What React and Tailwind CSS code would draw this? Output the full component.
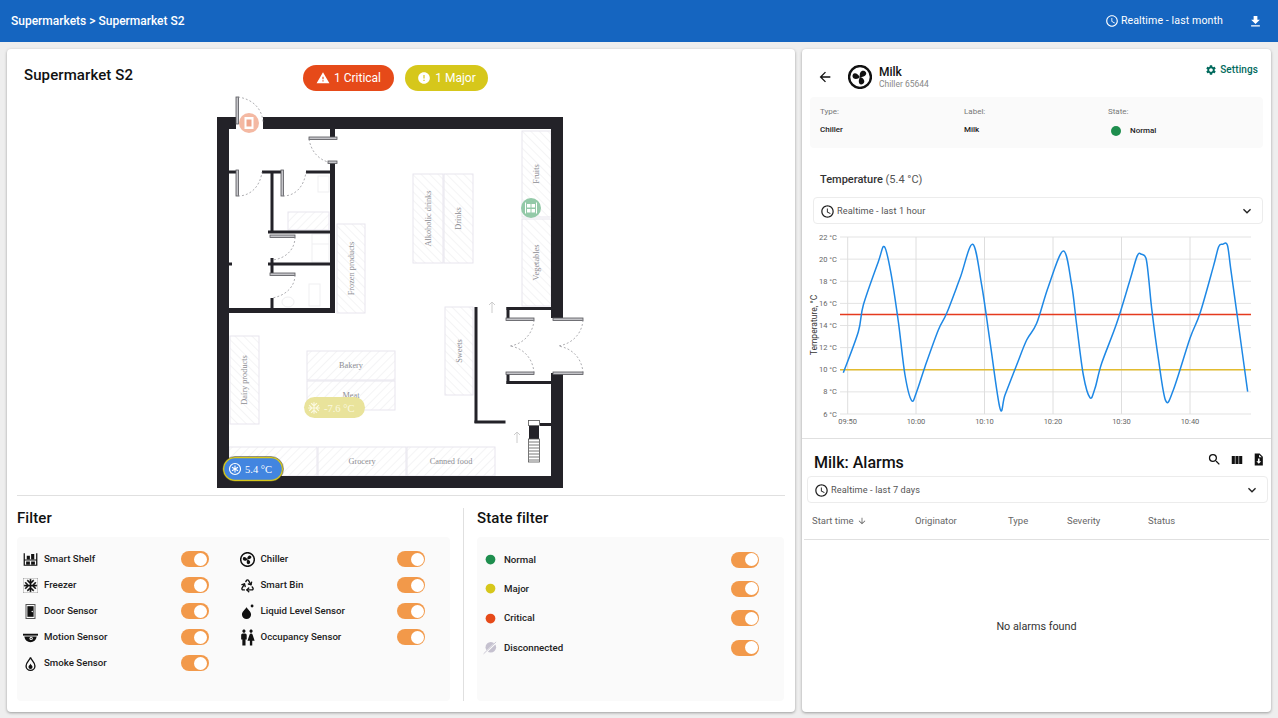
import { Recycle } from "lucide-react";
import {
  MdAccessTime,
  MdAcUnit,
  MdArrowBack,
  MdArrowDownward,
  MdError,
  MdFileDownload,
  MdKeyboardArrowDown,
  MdSearch,
  MdSettings,
  MdViewColumn,
  MdWarning,
  MdWc,
} from "react-icons/md";

/* small hand drawn device icons */
function ChillerIcon({ className }) {
  const blade = "M12 12C10.200 10.800 9.200 8 10.400 6.200c1.500-1.900 4.400-1.300 4.700.7.200 1.900-1.300 3.700-3.100 5.100z";
  return (
    <svg viewBox="1 1 22 22" className={className} fill="currentColor">
      <circle cx="12" cy="12" r="10" fill="none" stroke="currentColor" strokeWidth="2.200" />
      <path d={blade} transform="rotate(35 12 12)" />
      <path d={blade} transform="rotate(155 12 12)" />
      <path d={blade} transform="rotate(275 12 12)" />
    </svg>
  );
}

function FreezerIcon({ className }) {
  return <MdAcUnit className={className} strokeWidth={0.6} />;
}

function BinIcon({ className }) {
  return <Recycle className={className} strokeWidth={2.2} />;
}

function WcIcon() {
  return <MdWc className="-mx-[2px] -my-[2px] h-[19px] w-[19px]" />;
}

function ShelfIcon({ className }) {
  return (
    <svg viewBox="0 0 24 24" className={className} fill="currentColor">
      <path d="M1 2h2v20H1zM21 2h2v20h-2zM1 12h22v1.600H1zM1 20.400h22V22H1z" />
      <path d="M6 6h5v6H6zM13 3h5v9h-5zM5 15h6v5.400H5zM13 15h6v5.400h-6z" />
    </svg>
  );
}

function DoorIcon({ className }) {
  return (
    <svg viewBox="0 0 24 24" className={className} fill="currentColor">
      <path d="M4 0h16v24H4zm1.600 1.600v20.800h12.800V1.600z" fill="#555" />
      <path d="M7 3.500h10v17H7z" />
      <circle cx="14.800" cy="12" r="1.200" fill="#fafafa" />
    </svg>
  );
}

function MotionIcon({ className }) {
  return (
    <svg viewBox="0 0 24 24" className={className} fill="currentColor">
      <path d="M0 6h24v3H0z" />
      <path d="M2 10.500h20C21 16.500 17 19.500 12 19.500S3 16.500 2 10.500z" />
      <circle cx="13" cy="13.500" r="2.600" fill="#fafafa" />
      <circle cx="13" cy="13.500" r="1.200" />
    </svg>
  );
}

function SmokeIcon({ className }) {
  return (
    <svg viewBox="3 1 18 22" className={className} fill="none" stroke="currentColor" strokeWidth="2">
      <path d="M12 3c1 4 6.500 7 6.500 12.500a6.500 6.500 0 0 1-13 0C5.500 10 11 7 12 3z" />
      <path d="M12 12c.5 2 3 3 3 5a3 3 0 0 1-6 0c0-2 2.500-3 3-5z" fill="currentColor" stroke="none" />
    </svg>
  );
}

function LiquidIcon({ className }) {
  return (
    <svg viewBox="2 1 20 23" className={className} fill="currentColor">
      <path d="M10.500 6c2 3.500 7 7 7 11a7 7 0 0 1-14 0c0-4 5-7.500 7-11z" />
      <circle cx="19" cy="4" r="2.200" />
    </svg>
  );
}

function DisconnectedIcon({ className }) {
  return (
    <svg viewBox="0 0 24 24" className={className}>
      <circle cx="12.500" cy="11.500" r="8.500" fill="#c5c1cf" />
      <path d="M2 22 22 3" stroke="#fafafa" strokeWidth="3" />
      <path d="M1 22 21 3" stroke="#c5c1cf" strokeWidth="1.400" />
    </svg>
  );
}

function FileExportIcon({ className }) {
  return (
    <svg viewBox="0 0 24 24" className={className} fill="currentColor">
      <path fillRule="evenodd" d="M5 1h9l6 6v16H5zm8 2v5h5zM11 10v5H8l4.500 5 4.500-5h-3v-5z" />
    </svg>
  );
}

function Toggle() {
  return (
    <div className="flex h-4 w-7 items-center justify-end rounded-full bg-[#f2994a] pr-[1.500px]">
      <div className="h-[13px] w-[13px] rounded-full bg-white" />
    </div>
  );
}

function FilterRow({ icon: Icon, label, h = "h-[26px]" }) {
  return (
    <div className={`flex items-center ${h}`}>
      <div className="flex w-[27px] shrink-0 items-center pl-[6px] text-[#111]">
        <Icon className="h-[15px] w-[15px]" />
      </div>
      <span className="flex-1 pt-[1px] text-[9.700px] font-medium text-[#222]">{label}</span>
      <div className="pr-[25px]">
        <Toggle />
      </div>
    </div>
  );
}

function Dot({ color }) {
  return ({ className }) => (
    <svg viewBox="0 0 24 24" className={className}>
      <circle cx="12" cy="12" r="7.800" fill={color} />
    </svg>
  );
}

const leftFilters = [
  [ShelfIcon, "Smart Shelf"],
  [FreezerIcon, "Freezer"],
  [DoorIcon, "Door Sensor"],
  [MotionIcon, "Motion Sensor"],
  [SmokeIcon, "Smoke Sensor"],
];

const rightFilters = [
  [ChillerIcon, "Chiller"],
  [BinIcon, "Smart Bin"],
  [LiquidIcon, "Liquid Level Sensor"],
  [WcIcon, "Occupancy Sensor"],
];

const stateFilters = [
  [Dot({ color: "#1e8e4e" }), "Normal"],
  [Dot({ color: "#d6c71b" }), "Major"],
  [Dot({ color: "#e64a19" }), "Critical"],
  [DisconnectedIcon, "Disconnected"],
];

/* floor plan, coordinates follow the page so the numbers are easy to check */
const thinWalls = [
  [330, 129, 5, 9],
  [330, 162, 5, 150],
  [229, 170.500, 8, 3],
  [262, 170.500, 20, 3],
  [306, 170.500, 24, 3],
  [270.500, 172, 3, 60],
  [268, 230.500, 62, 3],
  [268, 262.500, 62, 3],
  [270.500, 258, 3, 17],
  [270.500, 298, 3, 10],
  [229, 262.500, 3, 3],
  [229, 308, 106, 5],
  [474.500, 307, 3, 116],
  [474.500, 420.500, 31, 3],
  [506.500, 307, 45, 3],
  [506.500, 307, 3, 12],
  [506.500, 373, 3, 11],
  [506.500, 381, 45, 3],
  [540, 423, 11, 3],
];

const leaves = [
  [236, 97, 2.500, 27],
  [309, 137, 28, 2.500],
  [328, 161, 9, 2.500],
  [236, 170, 2.500, 26],
  [281, 170, 2.500, 26],
  [270, 235, 25, 2.500],
  [270, 273, 25, 2.500],
  [506, 318, 28, 2.500],
  [553, 318, 30, 2.500],
  [506, 372, 28, 2.500],
  [553, 372, 30, 2.500],
];

const arcs = [
  "M238 97C252 99 262 108 263 122",
  "M309 139C311 151 318 159 328 162",
  "M238 196C250 196 260 187 262 172",
  "M283 196C295 196 304 187 306 172",
  "M295 237C295 250 285 259 272 260",
  "M295 275C295 287 285 296 272 298",
  "M534 320C533 334 523 344 510 346",
  "M534 373C533 358 523 348 510 346",
  "M583 320C582 334 572 344 558 346",
  "M583 373C582 358 572 348 558 346",
];

const shelves = [
  { x: 337, y: 224, w: 28, h: 89, label: "Frozen products", v: true, p: "back" },
  { x: 288, y: 212, w: 41, h: 18, p: "fwd" },
  { x: 413, y: 174, w: 30, h: 89, label: "Alkoholic drinks", v: true, p: "back" },
  { x: 444, y: 174, w: 29, h: 89, label: "Drinks", v: true, p: "back" },
  { x: 522, y: 131, w: 29, h: 86, label: "Fruits", v: true, p: "back" },
  { x: 522, y: 219, w: 29, h: 87, label: "Vegetables", v: true, p: "back" },
  { x: 445, y: 307, w: 28, h: 88, label: "Sweets", v: true, p: "back" },
  { x: 230, y: 336, w: 29, h: 88, label: "Dairy products", v: true, p: "back" },
  { x: 307, y: 351, w: 88, h: 29, label: "Bakery", p: "fwd" },
  { x: 307, y: 381, w: 88, h: 29, label: "Meat", p: "fwd" },
  { x: 229, y: 447, w: 88, h: 29, p: "fwd" },
  { x: 318, y: 447, w: 88, h: 29, label: "Grocery", p: "fwd" },
  { x: 407, y: 447, w: 88, h: 29, label: "Canned food", p: "fwd" },
];

function FloorPlan() {
  return (
    <svg viewBox="190 92 410 400" width="410" height="400" className="ml-[183px] block">
      <defs>
        <pattern id="fwd" width="6" height="6" patternUnits="userSpaceOnUse" patternTransform="rotate(45)">
          <line x1="0" y1="0" x2="0" y2="6" stroke="#e9e9ec" strokeWidth="1" />
        </pattern>
        <pattern id="back" width="6" height="6" patternUnits="userSpaceOnUse" patternTransform="rotate(-45)">
          <line x1="0" y1="0" x2="0" y2="6" stroke="#e9e9ec" strokeWidth="1" />
        </pattern>
      </defs>

      {shelves.map((s, i) => (
        <g key={i}>
          <rect x={s.x} y={s.y} width={s.w} height={s.h} fill={`url(#${s.p})`} stroke="#e8e5ee" strokeWidth="1" />
          {s.label && (
            <text
              x={s.x + s.w / 2}
              y={s.y + s.h / 2}
              textAnchor="middle"
              dominantBaseline="central"
              fontFamily="'Liberation Serif', serif"
              fontSize="8.300"
              fill="#8d8d93"
              transform={s.v ? `rotate(-90 ${s.x + s.w / 2} ${s.y + s.h / 2})` : undefined}
            >
              {s.label}
            </text>
          )}
        </g>
      ))}

      {/* faint washroom fittings */}
      <g fill="none" stroke="#efeff1" strokeWidth="1">
        <rect x="318" y="176" width="11" height="16" />
        <rect x="312" y="234" width="17" height="28" />
        <line x1="312" x2="329" y1="244" y2="244" />
        <ellipse cx="288" cy="302" rx="6" ry="5" />
        <rect x="309" y="284" width="11" height="22" />
      </g>

      {/* walls */}
      <rect x="217" y="117" width="12" height="371" fill="#232228" />
      <rect x="217" y="476" width="346" height="12" fill="#232228" />
      <rect x="217" y="117" width="19" height="12" fill="#232228" />
      <rect x="263" y="117" width="300" height="12" fill="#232228" />
      <rect x="551" y="117" width="12" height="201" fill="#232228" />
      <rect x="551" y="373" width="12" height="115" fill="#232228" />
      {thinWalls.map(([x, y, w, h], i) => (
        <rect key={i} x={x} y={y} width={w} height={h} fill="#232228" />
      ))}

      {/* doors */}
      {leaves.map(([x, y, w, h], i) => (
        <rect key={i} x={x} y={y} width={w} height={h} fill="#c4c4c8" stroke="#55555a" strokeWidth="0.800" />
      ))}
      {arcs.map((d) => (
        <path key={d} d={d} fill="none" stroke="#8b8b90" strokeWidth="0.700" strokeDasharray="2 2" />
      ))}

      {/* stairs and arrows */}
      <rect x="528.500" y="420.500" width="11" height="5" fill="#fff" stroke="#555" strokeWidth="0.800" />
      <rect x="529" y="426" width="10" height="13" fill="#232228" />
      <rect x="528.500" y="439" width="11" height="23" fill="#fff" stroke="#555" strokeWidth="0.800" />
      {[442, 445, 448, 451, 454, 457, 460].map((y) => (
        <line key={y} x1="529" x2="539" y1={y} y2={y} stroke="#555" strokeWidth="0.800" />
      ))}
      <path d="M492 313v-11m-3 3 3-3 3 3M517 443v-11m-3 3 3-3 3 3" fill="none" stroke="#ccc" strokeWidth="1" />

      {/* sensors */}
      <circle cx="249" cy="123" r="10" fill="#f4b9a3" />
      <rect x="244.500" y="117" width="9" height="12" fill="#fff" />
      <rect x="246.500" y="119.500" width="5" height="7" fill="#f0a78e" />
      <circle cx="531" cy="208" r="10" fill="#93c9a8" />
      <path d="M525 202.500h1v11h-1zM536 202.500h1v11h-1zM527 204h3.500v3.500H527zM531.500 204h3.500v3.500h-3.500zM527 209h3.500v3.500H527zM531.500 209h3.500v3.500h-3.500z" fill="#fff" />

      <rect x="304" y="397" width="61" height="21" rx="10.500" fill="#e9e39b" />
      <foreignObject x="307" y="401" width="14" height="14">
        <MdAcUnit className="h-[14px] w-[14px] text-[#fbf9e0]" />
      </foreignObject>
      <text x="324" y="411.500" fontFamily="'Liberation Serif', serif" fontSize="10.500" fill="#fbf9e0">-7.6 °C</text>

      <rect x="223.500" y="457.500" width="59" height="23" rx="11.500" fill="#4285e0" stroke="#d6c71b" strokeWidth="1.500" />
      <rect x="222.500" y="456.500" width="61" height="25" rx="12.500" fill="none" stroke="#333" strokeWidth="0.500" />
      <circle cx="235" cy="469" r="5.500" fill="none" stroke="#fff" strokeWidth="1.200" />
      <path d="M235 465.500v7M232 467.200l6 3.600M232 470.800l6-3.600" stroke="#fff" strokeWidth="1.100" />
      <text x="245" y="472.800" fontFamily="'Liberation Serif', serif" fontSize="10.500" fill="#fff">5.4 °C</text>
    </svg>
  );
}

/* chart data read off the curve, in chart pixels */
const curve = [
  [130, 443], [175, 320], [190, 240], [235, 110], [253, 65], [272, 140], [295, 290], [315, 450],
  [335, 527], [350, 500], [375, 425], [415, 315], [440, 265], [480, 160], [518, 58], [545, 180],
  [570, 350], [600, 550], [615, 510], [650, 420], [680, 345], [710, 295], [745, 185], [790, 78],
  [815, 180], [830, 300], [850, 450], [870, 518], [885, 490], [905, 415], [950, 295], [990, 165],
  [1012, 92], [1025, 88], [1038, 100], [1046, 160], [1055, 250], [1075, 400], [1097, 527], [1120, 495], [1170, 340],
  [1200, 265], [1240, 125], [1256, 65], [1268, 58], [1282, 60], [1292, 130], [1310, 260], [1343, 500],
].map(([x, y]) => [800 + x / 3, 225 + y / 3]);

function smoothPath(pts) {
  let d = `M${pts[0][0]} ${pts[0][1]}`;
  for (let i = 0; i < pts.length - 1; i++) {
    const p0 = pts[i - 1] || pts[i];
    const p1 = pts[i];
    const p2 = pts[i + 1];
    const p3 = pts[i + 2] || p2;
    const c1x = p1[0] + (p2[0] - p0[0]) / 6;
    const c1y = p1[1] + (p2[1] - p0[1]) / 6;
    const c2x = p2[0] - (p3[0] - p1[0]) / 6;
    const c2y = p2[1] - (p3[1] - p1[1]) / 6;
    d += `C${c1x} ${c1y} ${c2x} ${c2y} ${p2[0]} ${p2[1]}`;
  }
  return d;
}

const yTicks = [22, 20, 18, 16, 14, 12, 10, 8, 6];
const xTicks = [
  ["09:50", 847.7],
  ["10:00", 916],
  ["10:10", 984.5],
  ["10:20", 1053],
  ["10:30", 1121.5],
  ["10:40", 1190],
];
const yOf = (v) => 237 + ((22 - v) / 16) * 177;

function Chart() {
  return (
    <svg viewBox="802 224 469 214" width="469" height="214" className="block">
      <g fontFamily="Roboto, sans-serif" fontSize="7.500" fill="#666">
        {yTicks.map((v) => (
          <g key={v}>
            <line x1="840" x2="1251" y1={yOf(v)} y2={yOf(v)} stroke="#e3e3e3" strokeWidth="1" />
            <text x="837" y={yOf(v) + 2.500} textAnchor="end">{v} °C</text>
          </g>
        ))}
        {xTicks.map(([t, x]) => (
          <g key={t}>
            <line x1={x} x2={x} y1="237" y2="414" stroke="#dedede" strokeWidth="1" />
            <text x={x} y="424" textAnchor="middle">{t}</text>
          </g>
        ))}
        <text x="0" y="0" fontSize="8.500" fill="#333" textAnchor="middle" transform="translate(817 325) rotate(-90)">
          Temperature, °C
        </text>
      </g>
      <line x1="840" x2="1251" y1="314.500" y2="314.500" stroke="#e53a1e" strokeWidth="1.300" />
      <line x1="840" x2="1251" y1="369.800" y2="369.800" stroke="#e2bb2e" strokeWidth="1.400" />
      <path d={smoothPath(curve)} fill="none" stroke="#1e88e5" strokeWidth="1.500" />
    </svg>
  );
}

function RangeSelect({ label, className }) {
  return (
    <div className={`flex h-[27px] items-center rounded border border-[#ececec] pl-[6px] pr-[7px] pt-[1px] ${className}`}>
      <MdAccessTime className="h-[15px] w-[15px] text-[#222]" />
      <span className="ml-[2px] flex-1 text-[9.200px] tracking-[0.1px] text-[#555]">{label}</span>
      <MdKeyboardArrowDown className="h-[16px] w-[16px] text-[#222]" />
    </div>
  );
}

export default function App() {
  return (
    <div className="flex h-[718px] w-[1278px] flex-col overflow-hidden bg-[#eeeeee] font-['Roboto',sans-serif]">
      {/* Top bar */}
      <header className="flex h-[42px] shrink-0 items-center bg-[#1565c0] pl-[11px] pr-[15px] text-white">
        <span className="flex-1 text-[12px] font-medium">Supermarkets &gt; Supermarket S2</span>
        <MdAccessTime className="h-[14px] w-[14px]" />
        <span className="ml-[2px] text-[10.600px] tracking-[0.1px]">Realtime - last month</span>
        <MdFileDownload className="ml-[25px] h-[15px] w-[15px]" />
      </header>

      <div className="flex flex-1 gap-[7px] px-[7px] pb-[6px] pt-[7px]">
        {/* Floor plan card */}
        <section className="flex w-[788px] flex-col rounded bg-white shadow-[0_1px_3px_rgba(0,0,0,0.35)]">
          <div className="relative flex h-[43px] shrink-0 items-start pl-[17px] pt-[16px]">
            <h1 className="text-[15px] font-medium leading-[20px] tracking-[0.1px] text-[#111]">Supermarket S2</h1>
            <div className="absolute left-[296px] top-[16px] flex gap-[11px]">
              <div className="flex h-[26px] w-[91px] items-center justify-center gap-[4px] rounded-full bg-[#e64a19] text-[12px] text-white">
                <MdWarning className="h-[14px] w-[14px]" />
                1 Critical
              </div>
              <div className="flex h-[26px] w-[83px] items-center justify-center gap-[4px] rounded-full bg-[#d6c71b] text-[12px] text-white">
                <MdError className="h-[14px] w-[14px]" />
                1 Major
              </div>
            </div>
          </div>

          <FloorPlan />

          <div className="mx-[10px] mt-[3px] flex h-[206px] border-t border-[#e0e0e0]">
            <div className="flex w-[433px] flex-col">
              <h2 className="flex h-[41px] items-center pt-[3px] text-[15px] font-medium tracking-[0.1px] text-[#111]">Filter</h2>
              <div className="grid h-[164px] grid-cols-2 rounded bg-[#fafafa] pt-[9px]">
                <div>
                  {leftFilters.map(([icon, label]) => (
                    <FilterRow key={label} icon={icon} label={label} />
                  ))}
                </div>
                <div>
                  {rightFilters.map(([icon, label]) => (
                    <FilterRow key={label} icon={icon} label={label} />
                  ))}
                </div>
              </div>
            </div>
            <div className="ml-[13px] mt-[12px] w-px bg-[#e0e0e0]" />
            <div className="ml-[13px] flex w-[307px] flex-col">
              <h2 className="flex h-[41px] items-center pt-[3px] text-[15px] font-medium tracking-[0.1px] text-[#111]">State filter</h2>
              <div className="h-[164px] rounded bg-[#fafafa] pt-[8px]">
                {stateFilters.map(([icon, label]) => (
                  <FilterRow key={label} icon={icon} label={label} h="h-[29.300px]" />
                ))}
              </div>
            </div>
          </div>
        </section>

        {/* Details card */}
        <section className="flex w-[469px] flex-col rounded bg-white shadow-[0_1px_3px_rgba(0,0,0,0.35)]">
          <div className="flex h-[48px] shrink-0 items-start pl-[15px] pr-[13px] pt-[16px]">
            <MdArrowBack className="mt-[4px] h-[16px] w-[16px] text-[#111]" />
            <ChillerIcon className="ml-[15px] h-[24px] w-[24px] text-[#111]" />
            <div className="ml-[7px] flex-1">
              <div className="text-[12px] font-medium leading-[14px] text-[#111]">Milk</div>
              <div className="text-[8.500px] leading-[10px] text-[#888]">Chiller 65644</div>
            </div>
            <div className="-mt-[3px] flex items-center gap-[3px] text-[10px] font-medium tracking-[0.1px] text-[#00695c]">
              <MdSettings className="h-[12px] w-[12px]" />
              Settings
            </div>
          </div>

          <div className="mx-[8px] grid h-[51px] shrink-0 grid-cols-[144px_144px_1fr] rounded-sm bg-[#fafafa] px-[10px] pt-[10px]">
            <div>
              <div className="text-[8px] leading-[10px] text-[#777]">Type:</div>
              <div className="mt-[8px] text-[8px] font-medium leading-[10px] text-[#222]">Chiller</div>
            </div>
            <div>
              <div className="text-[8px] leading-[10px] text-[#777]">Label:</div>
              <div className="mt-[8px] text-[8px] font-medium leading-[10px] text-[#222]">Milk</div>
            </div>
            <div>
              <div className="text-[8px] leading-[10px] text-[#777]">State:</div>
              <div className="mt-[8.500px] flex items-center pl-[3px] text-[8px] font-medium leading-[10px] text-[#222]">
                <span className="h-[10px] w-[10px] rounded-full bg-[#1e8e4e]" />
                <span className="ml-[9px]">Normal</span>
              </div>
            </div>
          </div>

          <div className="h-[49px] shrink-0 pl-[18px] pt-[25px] text-[11px] leading-[14px] text-[#555]">
            <span className="font-medium text-[#333]">Temperature</span> (5.4 °C)
          </div>

          <RangeSelect label="Realtime - last 1 hour" className="ml-[11px] mr-[8px] shrink-0" />

          <Chart />

          <div className="flex h-[38px] shrink-0 items-end border-t border-[#e0e0e0] pb-[3px] pl-[12px] pr-[6px]">
            <h2 className="flex-1 text-[16px] font-medium leading-[20px] text-[#111]">Milk: Alarms</h2>
            <div className="mb-[6px] flex items-center gap-[8px] text-[#111]">
              <MdSearch className="h-[15px] w-[15px]" />
              <MdViewColumn className="h-[14px] w-[14px]" />
              <FileExportIcon className="h-[13px] w-[13px]" />
            </div>
          </div>

          <RangeSelect label="Realtime - last 7 days" className="ml-[5px] mr-[3px] shrink-0" />

          <div className="mx-[2px] grid h-[37px] shrink-0 grid-cols-[103px_93px_59px_81px_1fr] items-center border-b border-[#e0e0e0] pl-[8px] text-[9.500px] text-[#666]">
            <div className="flex items-center gap-[3px]">
              Start time
              <MdArrowDownward className="h-[10px] w-[10px]" />
            </div>
            <div>Originator</div>
            <div>Type</div>
            <div>Severity</div>
            <div>Status</div>
          </div>

          <div className="flex flex-1 items-center justify-center pt-[2px] text-[10.800px] text-[#333]">No alarms found</div>
        </section>
      </div>
    </div>
  );
}
